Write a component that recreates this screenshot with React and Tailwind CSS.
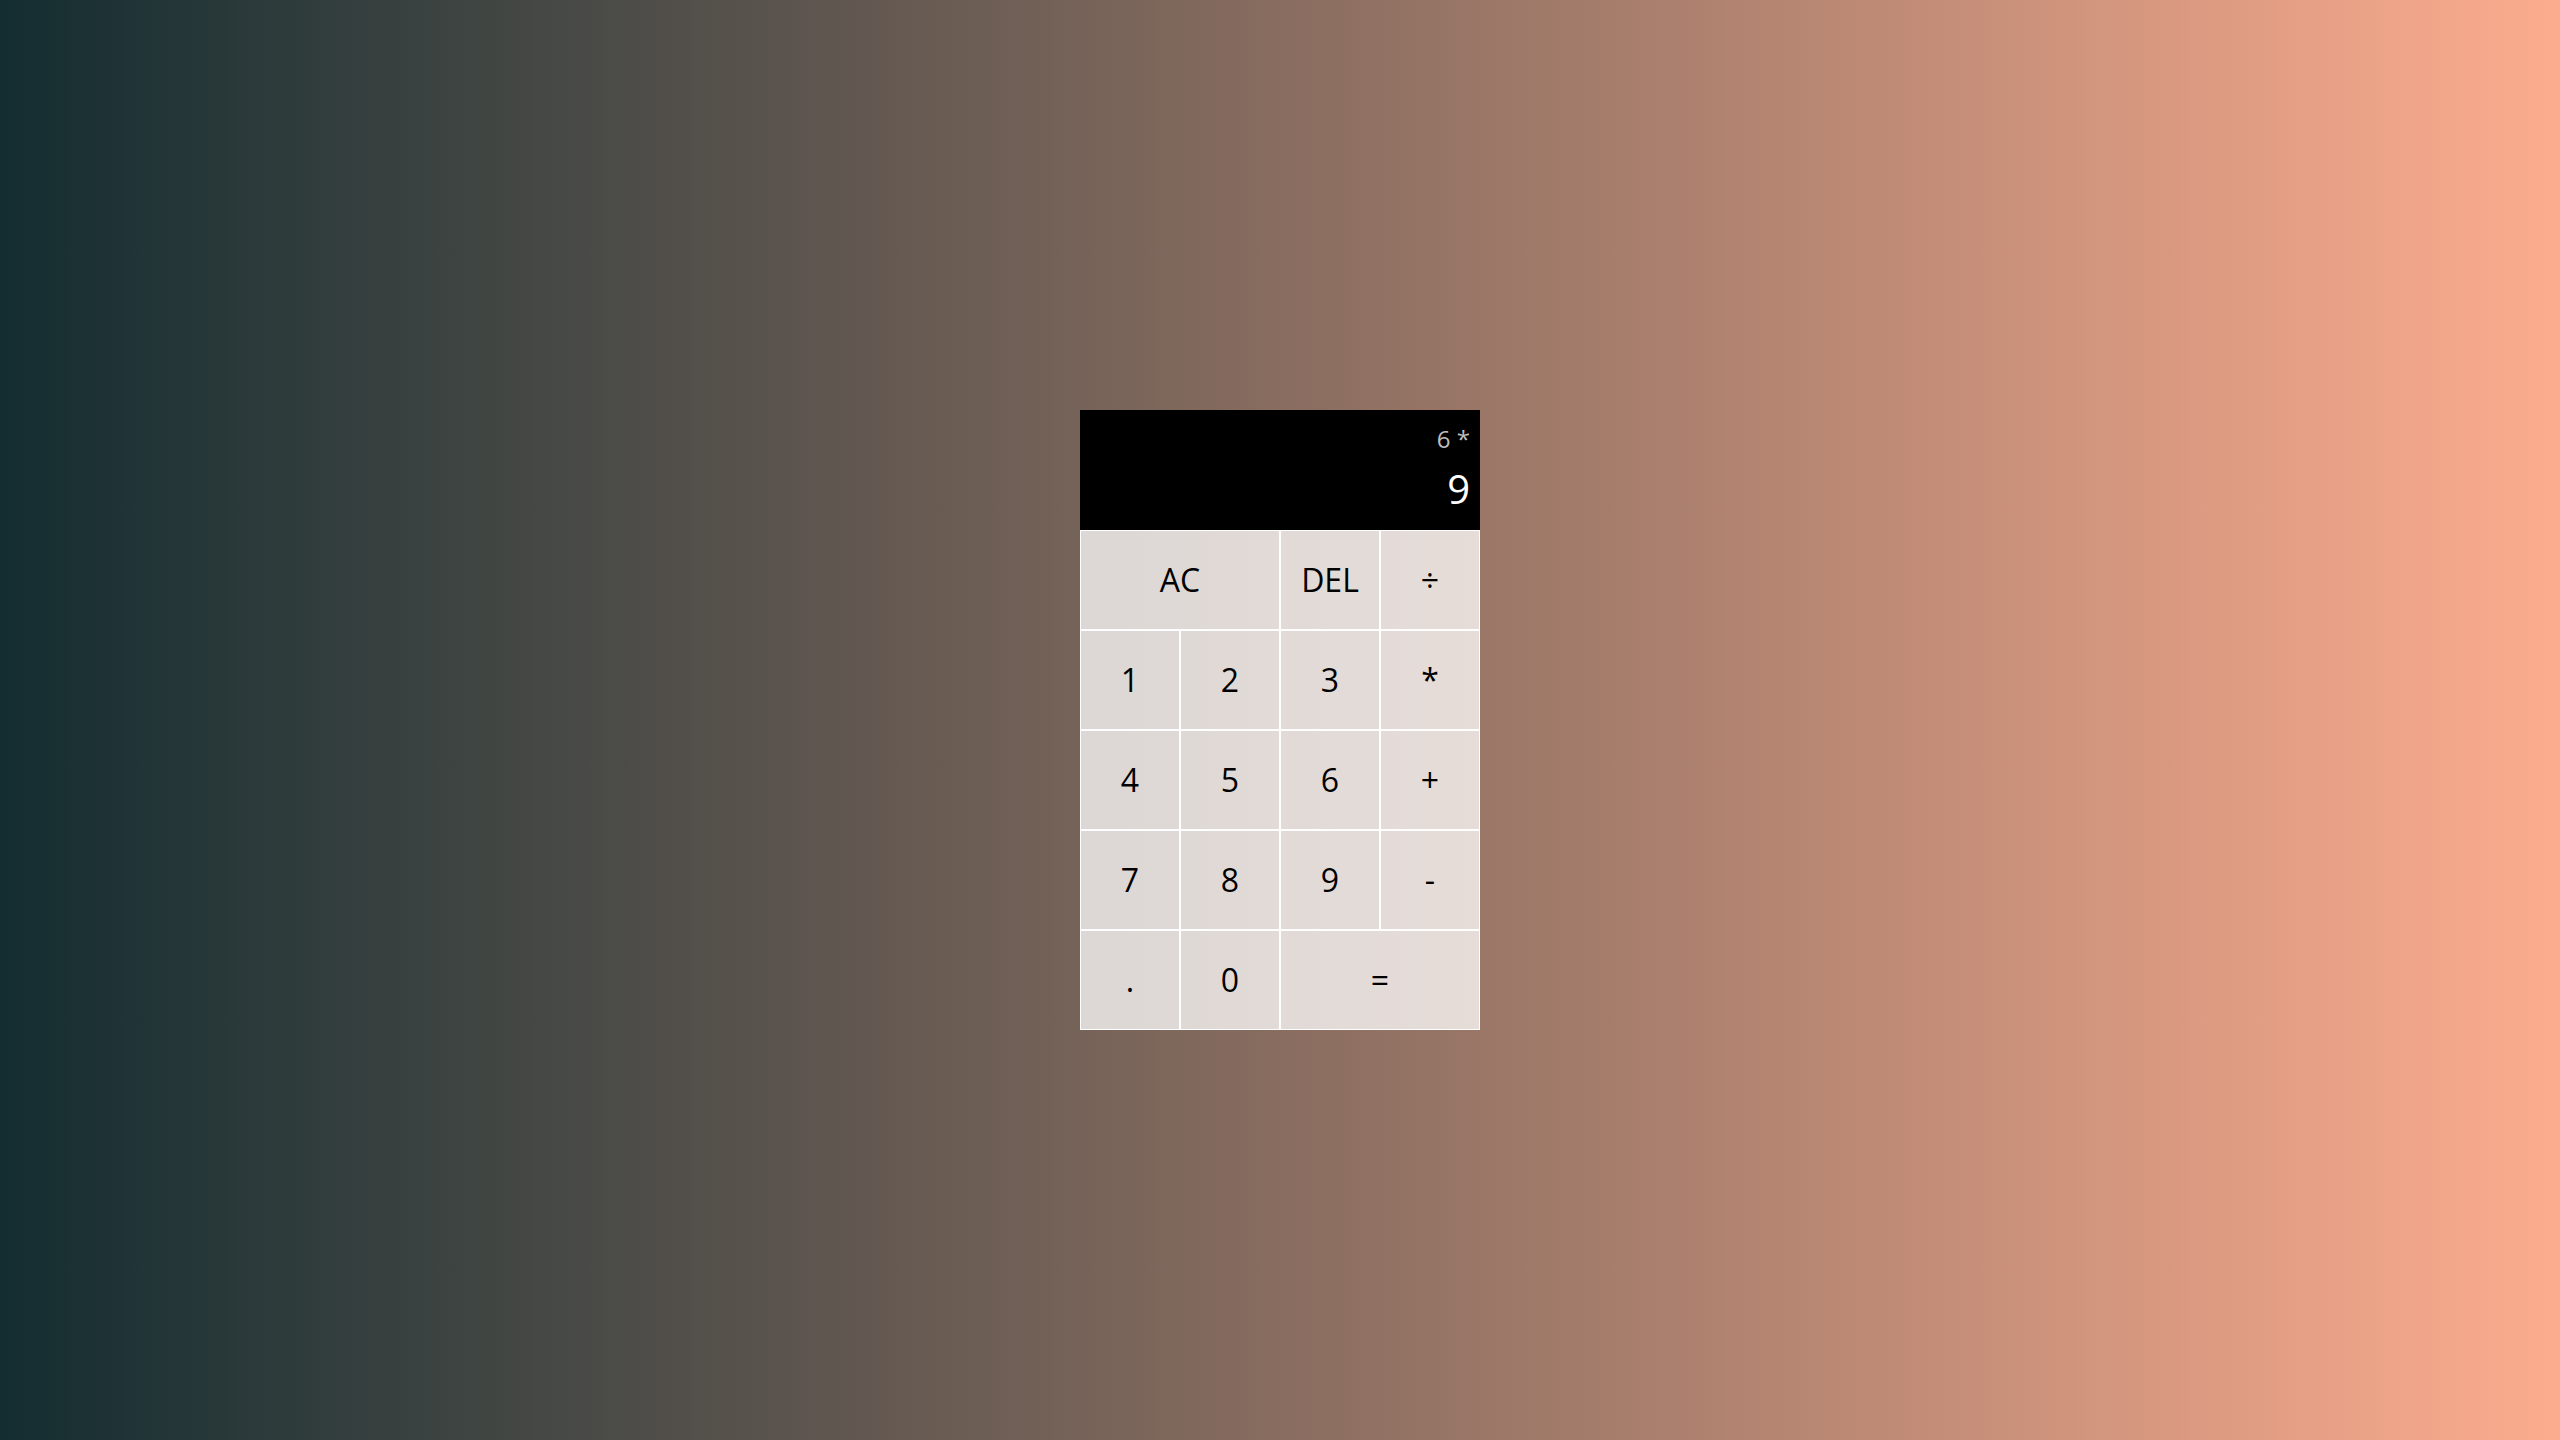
import React from "react";

const btn =
  "cursor-pointer text-[2rem] border border-white outline-none bg-white/75 text-black leading-none flex items-center justify-center";

export default function App() {
  return (
    <div
      className="min-h-screen w-full grid justify-center content-center bg-[linear-gradient(to_right,#142d31,#fcac8e)]"
      style={{ fontFamily: '"Open Sans", "Noto Sans", sans-serif' }}
    >
      <div className="grid grid-cols-[repeat(4,100px)] grid-rows-[120px_repeat(5,100px)]">
        <div className="col-span-4 bg-black flex flex-col items-end justify-around p-[10px] break-all">
          <div className="text-white/75 text-[1.5rem] leading-normal">6&nbsp;*</div>
          <div className="text-white text-[2.5rem] leading-normal">9</div>
        </div>
        <button className={btn + " col-span-2"}>AC</button>
        <button className={btn}>DEL</button>
        <button className={btn}>÷</button>
        <button className={btn}>1</button>
        <button className={btn}>2</button>
        <button className={btn}>3</button>
        <button className={btn}>*</button>
        <button className={btn}>4</button>
        <button className={btn}>5</button>
        <button className={btn}>6</button>
        <button className={btn}>+</button>
        <button className={btn}>7</button>
        <button className={btn}>8</button>
        <button className={btn}>9</button>
        <button className={btn}>-</button>
        <button className={btn}>.</button>
        <button className={btn}>0</button>
        <button className={btn + " col-span-2"}>=</button>
      </div>
    </div>
  );
}
